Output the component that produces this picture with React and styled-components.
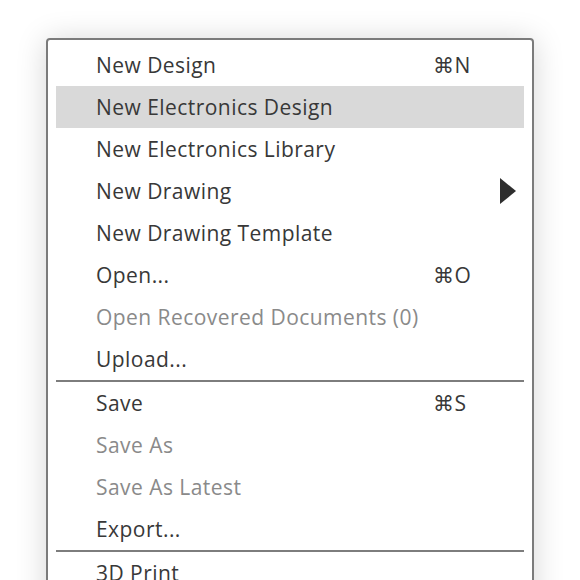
import React from 'react';
import styled, { createGlobalStyle } from 'styled-components';

const GlobalStyle = createGlobalStyle`
  html, body {
    margin: 0;
    padding: 0;
    background: #ffffff;
    overflow: hidden;
  }
`;

const Page = styled.div`
  width: 580px;
  height: 580px;
  padding: 38px 0 0 46px;
  box-sizing: border-box;
  overflow: hidden;
`;

const Menu = styled.div`
  width: 488px;
  box-sizing: border-box;
  background: #ffffff;
  border: 2px solid #7b7b7b;
  border-radius: 4px;
  box-shadow: 0 2px 30px rgba(0, 0, 0, 0.17);
  padding: 4px 8px 40px 8px;
  font-family: "Open Sans", "DejaVu Sans", sans-serif;
  font-size: 21px;
`;

const Item = styled.div`
  display: grid;
  grid-template-columns: 1fr 91px;
  align-items: center;
  height: 42px;
  padding-left: 40px;
  background: ${p => (p.$active ? '#d9d9d9' : 'transparent')};
  color: ${p => (p.$disabled ? '#8a8a8a' : '#383838')};
  letter-spacing: 0.45px;
`;

const Label = styled.span`
  white-space: nowrap;
`;

const Shortcut = styled.span`
  justify-self: start;
  color: #383838;
`;

const Arrow = styled.svg`
  justify-self: end;
  margin-right: 8px;
`;

const Separator = styled.div`
  height: 2px;
  background: #7d7d7d;
`;

const SubmenuArrow = () => (
  <Arrow width="16" height="26" viewBox="0 0 16 26">
    <path d="M0 0 L16 13 L0 26 Z" fill="#2e2e2e" />
  </Arrow>
);

const groups = [
  [
    { label: 'New Design', key: '⌘N' },
    { label: 'New Electronics Design', active: true },
    { label: 'New Electronics Library' },
    { label: 'New Drawing', submenu: true },
    { label: 'New Drawing Template' },
    { label: 'Open...', key: '⌘O' },
    { label: 'Open Recovered Documents (0)', disabled: true },
    { label: 'Upload...' },
  ],
  [
    { label: 'Save', key: '⌘S' },
    { label: 'Save As', disabled: true },
    { label: 'Save As Latest', disabled: true },
    { label: 'Export...' },
  ],
  [{ label: '3D Print' }],
];

export default function App() {
  return (
    <>
      <GlobalStyle />
      <Page>
        <Menu>
          {groups.map((items, gi) => (
            <React.Fragment key={gi}>
              {gi > 0 && <Separator />}
              {items.map(it => (
                <Item key={it.label} $active={it.active} $disabled={it.disabled}>
                  <Label>{it.label}</Label>
                  {it.key && <Shortcut>{it.key}</Shortcut>}
                  {it.submenu && <SubmenuArrow />}
                </Item>
              ))}
            </React.Fragment>
          ))}
        </Menu>
      </Page>
    </>
  );
}
